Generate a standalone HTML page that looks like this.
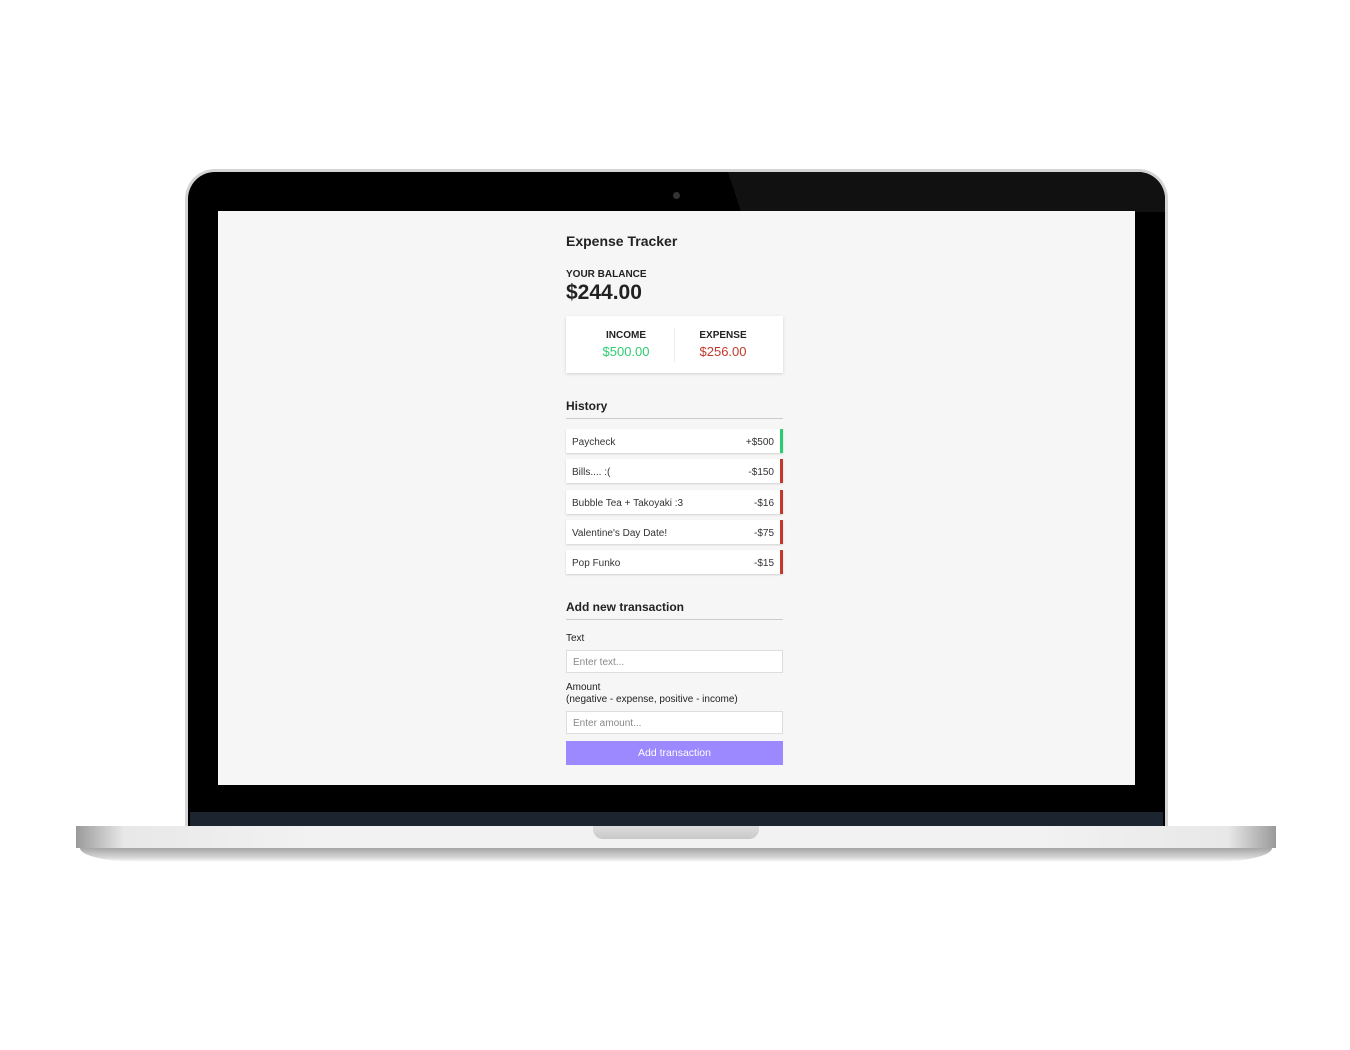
<!DOCTYPE html><html><head><style>
body{margin:0;width:1350px;height:1050px;background:#fff;position:relative;overflow:hidden;font-family:"Liberation Sans",sans-serif;color:#222}
.a{position:absolute}
.lid{left:185px;top:169px;width:983px;height:670px;background:#d4d4d4;border-radius:30px 30px 0 0}
.blk{left:188px;top:172px;width:977px;height:660px;background:#000;border-radius:27px 27px 0 0;overflow:hidden}
.screen{left:218px;top:211px;width:917px;height:574px;background:#f6f6f6}
.base{left:76px;top:826px;width:1200px;height:22px;background:linear-gradient(90deg,#9a9a9a 0,#e8e8e8 4%,#f2f2f2 20%,#f2f2f2 80%,#e8e8e8 96%,#9a9a9a 100%)}
.base2{left:80px;top:848px;width:1192px;height:14px;background:linear-gradient(#a5a5a5,#d8d8d8 70%,#fff);border-radius:0 0 60px 60px/0 0 14px 14px}
.notch{left:593px;top:826px;width:166px;height:13px;background:linear-gradient(#ddd,#c8c8c8);border-radius:0 0 10px 10px}
.card{left:566px;top:316px;width:217px;height:57px;background:#fff;box-shadow:0 1px 3px rgba(0,0,0,.15)}
.row{left:566px;width:214px;height:24px;background:#fff;box-shadow:0 1px 2px rgba(0,0,0,.15);font-size:10px;color:#333}
.row span{position:absolute;top:8px}
.inp{left:566px;width:217px;height:23px;background:#fff;border:1px solid #ddd;box-sizing:border-box;font-size:10px;color:#888;padding:6px 0 0 6px}
</style></head><body>
<div class="a lid"></div>
<div class="a blk"><div class="a" style="left:540px;top:0;width:437px;height:40px;background:#111;clip-path:polygon(0 0,100% 0,100% 100%,3% 100%)"></div>
<div class="a" style="left:2px;top:640px;width:973px;height:20px;background:#1c2430"></div>
<div class="a" style="left:2px;top:600px;width:973px;height:40px;background:#000;border-radius:0 0 20px 20px"></div></div>
<div class="a" style="left:673px;top:192px;width:7px;height:7px;border-radius:50%;background:#333"></div>
<div class="a screen"></div>
<div class="a base"></div><div class="a base2"></div><div class="a notch"></div>

<div class="a" style="left:566px;top:233px;font-size:14px;font-weight:bold">Expense Tracker</div>
<div class="a" style="left:566px;top:269px;font-size:10px;font-weight:bold">YOUR BALANCE</div>
<div class="a" style="left:566px;top:281px;font-size:21px;font-weight:bold">$244.00</div>
<div class="a card">
<div class="a" style="left:108px;top:12px;width:1px;height:34px;background:#eee"></div>
<div class="a" style="left:0;width:120px;top:14px;text-align:center;font-size:10px;font-weight:bold">INCOME</div>
<div class="a" style="left:0;width:120px;top:28px;text-align:center;font-size:13px;color:#2ecc71">$500.00</div>
<div class="a" style="left:97px;width:120px;top:14px;text-align:center;font-size:10px;font-weight:bold">EXPENSE</div>
<div class="a" style="left:97px;width:120px;top:28px;text-align:center;font-size:13px;color:#c0392b">$256.00</div>
</div>
<div class="a" style="left:566px;top:399px;font-size:12px;font-weight:bold">History</div>
<div class="a" style="left:566px;top:418px;width:217px;height:1px;background:#ccc"></div>
<div class="a row" style="top:429px;border-right:3px solid #2ecc71"><span style="left:6px">Paycheck</span><span style="right:6px">+$500</span></div>
<div class="a row" style="top:459px;border-right:3px solid #c0392b"><span style="left:6px">Bills.... :(</span><span style="right:6px">-$150</span></div>
<div class="a row" style="top:490px;border-right:3px solid #c0392b"><span style="left:6px">Bubble Tea + Takoyaki :3</span><span style="right:6px">-$16</span></div>
<div class="a row" style="top:520px;border-right:3px solid #c0392b"><span style="left:6px">Valentine's Day Date!</span><span style="right:6px">-$75</span></div>
<div class="a row" style="top:550px;border-right:3px solid #c0392b"><span style="left:6px">Pop Funko</span><span style="right:6px">-$15</span></div>
<div class="a" style="left:566px;top:600px;font-size:12px;font-weight:bold">Add new transaction</div>
<div class="a" style="left:566px;top:619px;width:217px;height:1px;background:#ccc"></div>
<div class="a" style="left:566px;top:633px;font-size:10px">Text</div>
<div class="a inp" style="top:650px">Enter text...</div>
<div class="a" style="left:566px;top:682px;font-size:10px;line-height:12px">Amount<br>(negative - expense, positive - income)</div>
<div class="a inp" style="top:711px">Enter amount...</div>
<div class="a" style="left:566px;top:741px;width:217px;height:24px;background:#9c88ff;color:#fff;font-size:10.5px;text-align:center;line-height:24px">Add transaction</div>
</body></html>
